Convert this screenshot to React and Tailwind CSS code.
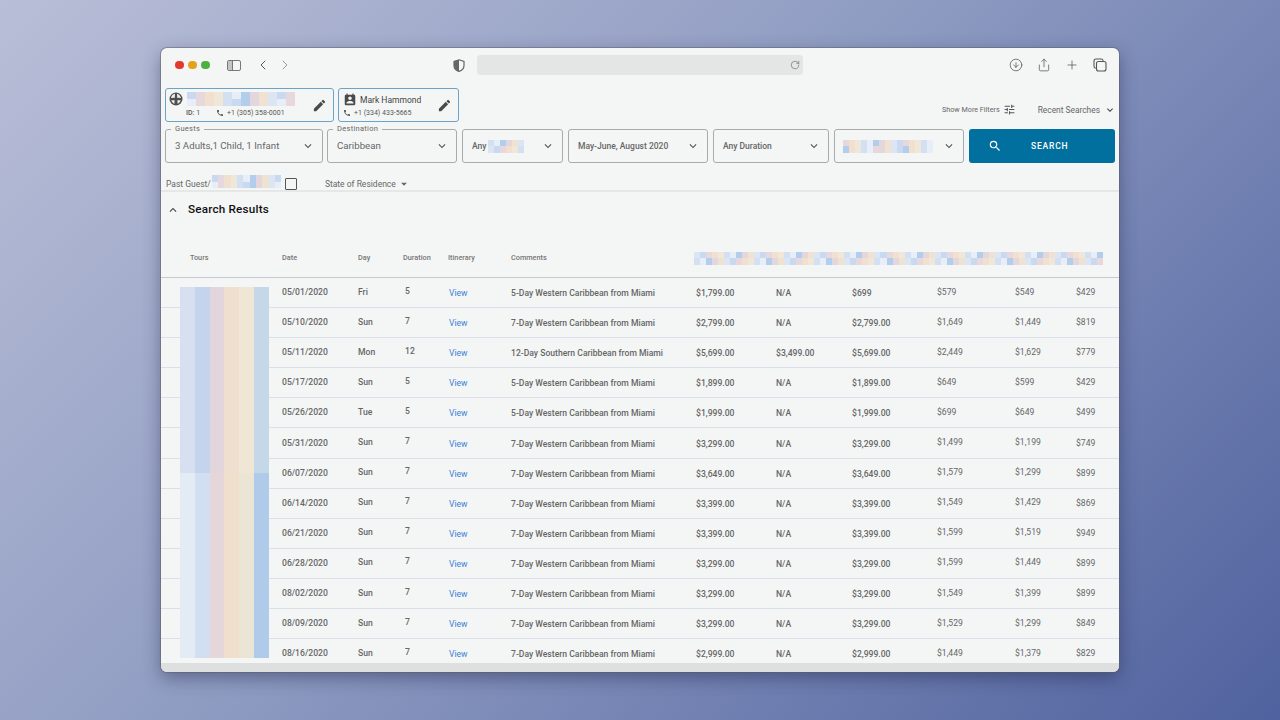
import React from 'react';
import { ChevronLeft, ChevronRight, Plus, RotateCw, CircleArrowDown, Share } from 'lucide-react';
import { MdEdit, MdPermContactCalendar, MdPhone, MdTune, MdSearch, MdExpandMore, MdExpandLess, MdArrowDropDown } from 'react-icons/md';

// blurred-out pieces of the screenshot
const tints = ['#dbe5f3', '#c9d9f0', '#e6d8dc', '#f1e0cf', '#efe7d7', '#d3e0f2', '#e8eef7', '#b3cdec', '#e4d7dc', '#f0e2d2'];

const Mosaic = ({ count, cell, seed = 1, className = '' }) => {
  const cells = [];
  for (let i = 0; i < count * 2; i++) {
    const col = Math.floor(i / 2);
    const pick = (col + seed + (i % 2 && (col * seed) % 5 === 0 ? 5 : 0)) % tints.length;
    cells.push(tints[pick]);
  }
  return (
    <div className={`grid grid-flow-col grid-rows-2 shrink-0 ${className}`} style={{ gridAutoColumns: cell }}>
      {cells.map((c, i) => (
        <div key={i} style={{ backgroundColor: c }} />
      ))}
    </div>
  );
};

const rows = [
  ['05/01/2020', 'Fri', '5', '5-Day Western Caribbean from Miami', '$1,799.00', 'N/A', '$699', '$579', '$549', '$429'],
  ['05/10/2020', 'Sun', '7', '7-Day Western Caribbean from Miami', '$2,799.00', 'N/A', '$2,799.00', '$1,649', '$1,449', '$819'],
  ['05/11/2020', 'Mon', '12', '12-Day Southern Caribbean from Miami', '$5,699.00', '$3,499.00', '$5,699.00', '$2,449', '$1,629', '$779'],
  ['05/17/2020', 'Sun', '5', '5-Day Western Caribbean from Miami', '$1,899.00', 'N/A', '$1,899.00', '$649', '$599', '$429'],
  ['05/26/2020', 'Tue', '5', '5-Day Western Caribbean from Miami', '$1,999.00', 'N/A', '$1,999.00', '$699', '$649', '$499'],
  ['05/31/2020', 'Sun', '7', '7-Day Western Caribbean from Miami', '$3,299.00', 'N/A', '$3,299.00', '$1,499', '$1,199', '$749'],
  ['06/07/2020', 'Sun', '7', '7-Day Western Caribbean from Miami', '$3,649.00', 'N/A', '$3,649.00', '$1,579', '$1,299', '$899'],
  ['06/14/2020', 'Sun', '7', '7-Day Western Caribbean from Miami', '$3,399.00', 'N/A', '$3,399.00', '$1,549', '$1,429', '$869'],
  ['06/21/2020', 'Sun', '7', '7-Day Western Caribbean from Miami', '$3,399.00', 'N/A', '$3,399.00', '$1,599', '$1,519', '$949'],
  ['06/28/2020', 'Sun', '7', '7-Day Western Caribbean from Miami', '$3,299.00', 'N/A', '$3,299.00', '$1,599', '$1,449', '$899'],
  ['08/02/2020', 'Sun', '7', '7-Day Western Caribbean from Miami', '$3,299.00', 'N/A', '$3,299.00', '$1,549', '$1,399', '$899'],
  ['08/09/2020', 'Sun', '7', '7-Day Western Caribbean from Miami', '$3,299.00', 'N/A', '$3,299.00', '$1,529', '$1,299', '$849'],
  ['08/16/2020', 'Sun', '7', '7-Day Western Caribbean from Miami', '$2,999.00', 'N/A', '$2,999.00', '$1,449', '$1,379', '$829'],
];

const gridCols = 'grid grid-cols-[121px_76px_47px_44px_62px_185px_80px_76px_85px_78px_61px_1fr]';

const Select = ({ label, width, big, children }) => (
  <div className={`relative h-[34px] shrink-0 rounded-[3px] border border-[#a9abab] flex items-center justify-between pl-[9px] pr-[7px] ${width}`}>
    {label && (
      <span className="absolute -top-[6px] left-[5px] bg-[#f4f6f6] px-[4px] text-[7.5px] leading-[10px] tracking-[0.3px] text-[#666]">{label}</span>
    )}
    <div className={`flex items-center gap-[2px] text-[#666] ${big ? 'text-[9.7px]' : 'text-[8.5px] font-medium'}`}>{children}</div>
    <MdExpandMore className="text-[#555] w-[14px] h-[14px] shrink-0" />
  </div>
);

const Edit = () => <MdEdit className="w-[15px] h-[15px] text-[#4a4a4a] shrink-0" />;

const App = () => {
  return (
    <div className="w-[1280px] h-[720px] overflow-hidden pt-[48px] pl-[161px] bg-[linear-gradient(135deg,#b9bed7_0%,#8f9cc2_45%,#50629f_100%)] font-['Roboto',sans-serif]">
      <div className="w-[958px] h-[624px] rounded-[6px] overflow-hidden bg-[#f4f6f6] shadow-[0_0_0_1px_rgba(90,90,100,0.45),0_6px_18px_rgba(30,35,70,0.45)] flex flex-col">
        {/* browser toolbar */}
        <div className="h-[36px] shrink-0 flex items-center pl-[14px] pr-[12px] pb-[2px]">
          <div className="flex gap-[4.500px]">
            <span className="w-[8.500px] h-[8.500px] rounded-full bg-[#e3392f]" />
            <span className="w-[8.500px] h-[8.500px] rounded-full bg-[#e2a31f]" />
            <span className="w-[8.500px] h-[8.500px] rounded-full bg-[#4cb13f]" />
          </div>
          <svg className="ml-[17px] w-[14px] h-[11px]" viewBox="0 0 14 11" fill="none">
            <rect x=".5" y=".5" width="13" height="10" rx="1.500" stroke="#777" />
            <rect x="1" y="1" width="4" height="9" fill="#c4c4c4" />
            <path d="M5.500 .5v10" stroke="#777" />
          </svg>
          <ChevronLeft className="ml-[14px] w-[16px] h-[16px] text-[#555]" strokeWidth={1.5} />
          <ChevronRight className="ml-[6px] w-[16px] h-[16px] text-[#999]" strokeWidth={1.5} />
          <svg className="ml-[160px] w-[12px] h-[13px]" viewBox="0 0 12 13">
            <path d="M6 .8 11 2.4v4c0 3-2.2 5-5 6-2.800-1-5-3-5-6v-4z" fill="none" stroke="#666" strokeWidth="1.2" />
            <path d="M6 .8v11.600c-2.800-1-5-3-5-6v-4z" fill="#666" />
          </svg>
          <div className="ml-[12px] w-[326px] h-[20px] rounded-[4px] bg-[#e4e5e5] flex items-center justify-end pr-[3px]">
            <RotateCw className="w-[10px] h-[10px] text-[#666]" strokeWidth={1.5} />
          </div>
          <div className="ml-auto flex items-center gap-[14px] text-[#555]">
            <CircleArrowDown className="w-[14px] h-[14px]" strokeWidth={1.3} />
            <Share className="w-[14px] h-[14px]" strokeWidth={1.3} />
            <Plus className="w-[14px] h-[14px]" strokeWidth={1.3} />
            <svg className="w-[14px] h-[14px]" viewBox="0 0 14 14" fill="none" stroke="#555" strokeWidth="1.1">
              <rect x="3.500" y="3.500" width="9.500" height="9.500" rx="2" />
              <path d="M2.800 10.200C1.600 10 1 9.300 1 8.200V3c0-1.200.8-2 2-2h5.200c1.100 0 1.800.6 2 1.800" />
            </svg>
          </div>
        </div>

        {/* guest cards */}
        <div className="h-[38px] shrink-0 flex items-end pl-[4px] pr-[3px]">
          <div className="w-[169px] h-[34px] rounded-[3px] border border-[#6ea3c8] flex items-center pl-[3px] pr-[6px]">
            <svg className="w-[14px] h-[14px] shrink-0 mb-[12px]" viewBox="0 0 14 14">
              <circle cx="7" cy="7" r="6.500" fill="#4f4f4f" />
              <path d="M3 3.400C3.800 2.500 4.800 2 6 1.800L5.800 5.800 2 6C2.100 5 2.400 4.100 3 3.400zM8 1.800c2 .4 3.500 2 4 4.200L8.200 5.800zM2.300 8.200l3.300 0-.2 3.500c-1.500-.6-2.600-1.900-3.100-3.500zM8.400 8.200l3.300 0c-.5 1.600-1.600 2.900-3.100 3.500z" fill="#eceeee" />
            </svg>
            <div className="ml-[3px] flex-1">
              <Mosaic count={12} cell="9px" seed={1} className="h-[14px] w-[108px] ml-[1px]" />
              <div className="mt-[2px] flex items-center text-[7px] leading-[10px] text-[#555]">
                <span className="ml-[0px]"><b className="font-medium">ID:</b> 1</span>
                <MdPhone className="ml-[16px] w-[8px] h-[8px]" />
                <span className="ml-[3px]">+1 (305) 358-0001</span>
              </div>
            </div>
            <Edit />
          </div>
          <div className="ml-[4px] w-[121px] h-[34px] rounded-[3px] border border-[#6ea3c8] flex items-center pl-[4px] pr-[6px]">
            <div className="flex-1">
              <div className="flex items-center gap-[3px]">
                <MdPermContactCalendar className="w-[14px] h-[14px] text-[#4a4a4a]" />
                <span className="text-[8.500px] leading-[12px] text-[#444]">Mark Hammond</span>
              </div>
              <div className="mt-[1px] flex items-center gap-[3px] text-[7px] leading-[10px] text-[#555]">
                <MdPhone className="w-[8px] h-[8px]" />
                <span>+1 (334) 433-5665</span>
              </div>
            </div>
            <Edit />
          </div>
          <div className="ml-auto mb-[6px] flex items-center text-[#666]">
            <span className="text-[7.200px] leading-[10px]">Show More Filters</span>
            <MdTune className="ml-[3px] w-[13px] h-[13px] text-[#555]" />
            <span className="ml-[22px] text-[8.400px] leading-[10px]">Recent Searches</span>
            <MdExpandMore className="ml-[4px] w-[12px] h-[12px] text-[#444]" />
          </div>
        </div>

        {/* filters */}
        <div className="mt-[7px] h-[34px] shrink-0 flex pl-[4px] gap-[5px]">
          <Select label="Guests" big width="w-[158px] mr-[-1px]">3 Adults,1 Child, 1 Infant</Select>
          <Select label="Destination" big width="w-[130px]">Caribbean</Select>
          <Select width="w-[101px]">
            <span>Any</span>
            <Mosaic count={6} cell="6px" seed={5} className="h-[13px] w-[37px]" />
          </Select>
          <Select width="w-[140px]">May-June, August 2020</Select>
          <Select width="w-[116px]">Any Duration</Select>
          <Select width="w-[130px]">
            <Mosaic count={15} cell="6px" seed={2} className="h-[13px] w-[92px] ml-[-1px]" />
          </Select>
          <div className="w-[146px] h-[34px] rounded-[3px] bg-[#02709f] flex items-center text-white">
            <MdSearch className="ml-[19px] w-[14px] h-[14px]" />
            <span className="ml-[29px] text-[8.500px] font-medium tracking-[0.8px]">SEARCH</span>
          </div>
        </div>

        {/* past guest row */}
        <div className="h-[29px] shrink-0 pt-[13px] pl-[5px] border-b-2 border-[#e6e8e8]">
          <div className="flex items-center h-[16px] text-[8.500px] text-[#666]">
            <span>Past Guest/</span>
            <Mosaic count={11} cell="6.300px" seed={1} className="h-[13px] w-[68px] ml-[1px] mb-[5px]" />
            <span className="ml-[5px] w-[12px] h-[12px] rounded-[1px] border-[1.500px] border-[#555]" />
            <span className="ml-[28px]">State of Residence</span>
            <MdArrowDropDown className="ml-[1px] w-[14px] h-[14px]" />
          </div>
        </div>

        {/* results */}
        <div className="h-[35px] shrink-0 flex items-center pl-[5px]">
          <MdExpandLess className="w-[14px] h-[14px] text-[#444]" />
          <span className="ml-[8px] text-[11.700px] font-medium text-[#111] tracking-[0.2px]">Search Results</span>
        </div>

        <div className={`${gridCols} h-[51px] pt-[12px] shrink-0 items-center text-[7.300px] font-medium text-[#777] border-b border-[#c6c9d2]`}>
          <span className="pl-[29px]">Tours</span>
          <span>Date</span>
          <span>Day</span>
          <span className="ml-[-2px]">Duration</span>
          <span className="ml-[-1px]">Itinerary</span>
          <span>Comments</span>
          <Mosaic count={68} cell="6.030px" seed={0} className="col-span-6 h-[13px] w-[410px] ml-[-2px]" />
        </div>

        <div className="relative flex-1 overflow-hidden">
          {/* blurred tour names, laid over the first column */}
          <div className="absolute left-[19px] top-[9px] w-[89px] h-[371px] grid grid-cols-6 grid-rows-[186px_185px] z-10">
            {['#d6e0f0', '#c3d4ec', '#e2d6dc', '#efdfcf', '#efe6d6', '#c5d8e8', '#e3ebf5', '#d2dff0', '#e5d6da', '#f0dfcc', '#ebe5d5', '#b0cbea'].map((c) => (
              <div key={c} style={{ backgroundColor: c }} />
            ))}
          </div>
          {rows.map((r) => (
            <div key={r[0]} className={`${gridCols} h-[30.100px] items-center text-[8.600px] text-[#666] border-b border-[#dcdeea]`}>
              <span />
              <span className="font-medium">{r[0]}</span>
              <span className="font-medium mb-[1px]">{r[1]}</span>
              <span className="font-medium mb-[3px]">{r[2]}</span>
              <span className="text-[#3a7fd5] mt-[2px]">View</span>
              <span className="font-medium mt-[2px]">{r[3]}</span>
              <span className="font-medium mt-[2px]">{r[4]}</span>
              <span className="font-medium mt-[2px]">{r[5]}</span>
              <span className="font-medium mt-[2px]">{r[6]}</span>
              <span className="mb-[1px]">{r[7]}</span>
              <span className="mb-[1px]">{r[8]}</span>
              <span>{r[9]}</span>
            </div>
          ))}
        </div>
        <div className="h-[9px] shrink-0 bg-[#dedfdf]" />
      </div>
    </div>
  );
};

export default App;
